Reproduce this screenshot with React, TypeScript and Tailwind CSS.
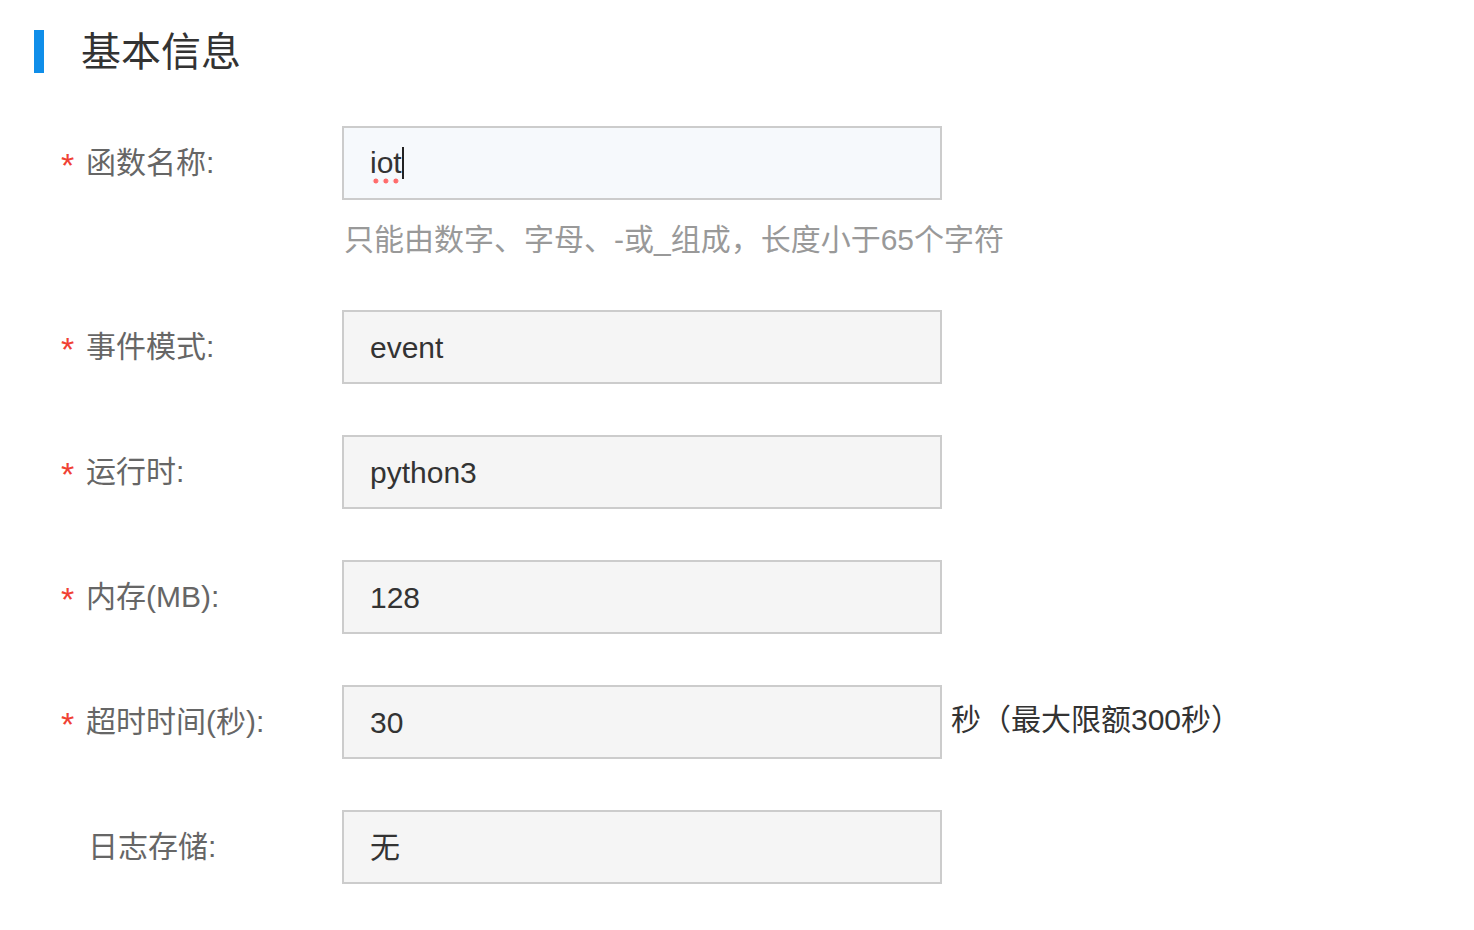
const font = { fontFamily: '"Liberation Sans", "Noto Sans CJK SC", sans-serif' };

type RowProps = {
  label: string;
  required?: boolean;
  focused?: boolean;
  suffix?: string;
  children: React.ReactNode;
};

function FieldRow({ label, required = true, focused = false, suffix, children }: RowProps) {
  return (
    <div className="flex items-center h-[74px]">
      <div className="w-[281px] flex items-center shrink-0">
        <span className="w-[25px] h-[30px] -mt-[4px] text-[34px] leading-[38px] text-[#f04134]">{required ? "*" : ""}</span>
        <span className={`text-[30px] text-[#666] leading-none ${required ? "" : "pl-[2px]"}`}>{label}</span>
      </div>
      <div
        className={`w-[600px] h-full border-2 border-[#ccc] flex items-center px-[26px] text-[30px] text-[#333] ${
          focused ? "bg-[#f6f9fc]" : "bg-[#f5f5f5]"
        }`}
      >
        {children}
      </div>
      {suffix && <span className="ml-[9px] -mt-[6px] text-[30px] text-[#333]">{suffix}</span>}
    </div>
  );
}

export default function App() {
  return (
    <div className="w-[1474px] h-[930px] bg-white pt-[30px] pl-[34px]" style={font}>
      <div className="flex items-center h-[43px]">
        <div className="w-[10px] h-full bg-[#108ee9]" />
        <h2 className="ml-[37px] text-[40px] text-[#333] leading-none">基本信息</h2>
      </div>

      <div className="mt-[53px] pl-[27px]">
        <FieldRow label="函数名称:" focused>
          <span className="leading-[34px] pb-[4px] -mb-[4px] bg-[radial-gradient(circle,#ff6b6b_2.2px,transparent_2.8px)] bg-[length:10px_6px] bg-repeat-x bg-bottom">
            iot
          </span>
          <span className="w-[2px] h-[32px] bg-[#222]" />
        </FieldRow>
        <p className="ml-[283px] mt-[20px] h-[40px] text-[30px] text-[#999] leading-[40px]">
          只能由数字、字母、-或_组成，长度小于65个字符
        </p>

        <div className="mt-[50px] flex flex-col gap-[51px]">
          <FieldRow label="事件模式:">event</FieldRow>
          <FieldRow label="运行时:">python3</FieldRow>
          <FieldRow label="内存(MB):">128</FieldRow>
          <FieldRow label="超时时间(秒):" suffix="秒（最大限额300秒）">30</FieldRow>
          <FieldRow label="日志存储:" required={false}>无</FieldRow>
        </div>
      </div>
    </div>
  );
}
